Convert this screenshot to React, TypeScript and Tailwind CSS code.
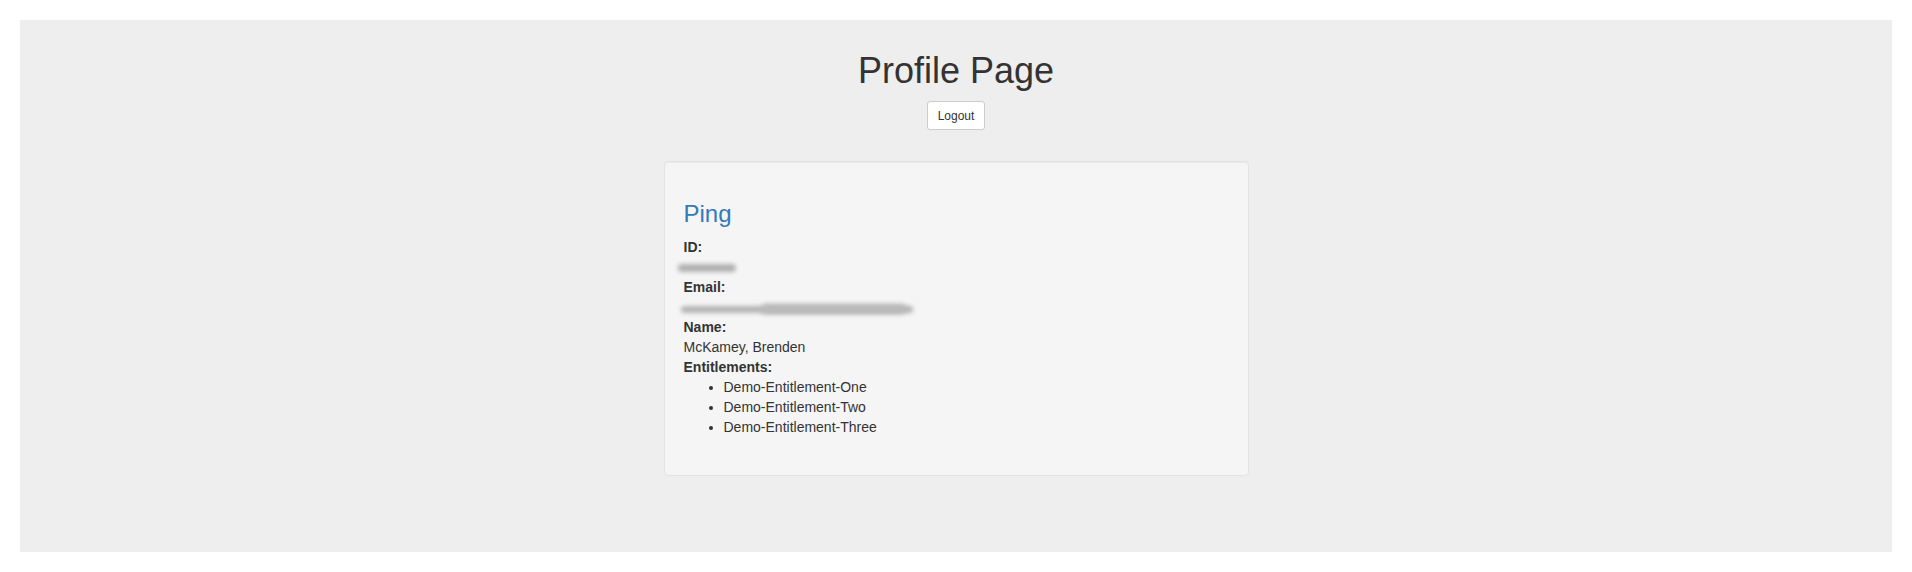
import React from 'react';

const entitlements = ['Demo-Entitlement-One', 'Demo-Entitlement-Two', 'Demo-Entitlement-Three'];

function Redacted({ wide }: { wide?: boolean }) {
  if (!wide) {
    return (
      <div className="h-5 flex items-center">
        <div className="-ml-[6px] mt-[2px] w-[58px] h-[8px] rounded-full bg-[#b0b0b0] blur-[2px]" />
      </div>
    );
  }
  return (
    <div className="h-5 flex items-center">
      <div className="relative -ml-[3px] mt-[4px] w-[234px] h-[10px]">
        <div className="absolute left-0 top-[2px] w-[232px] h-[7px] rounded-full bg-[#b4b4b4] blur-[2px]" />
        <div className="absolute left-[80px] top-0 w-[145px] h-[10px] rounded-full bg-[#bababa] blur-[2.5px]" />
      </div>
    </div>
  );
}

export default function App() {
  return (
    <div className="min-h-[572px] bg-white p-5 font-['Liberation_Sans',Arial,sans-serif] text-[#333] text-[14px] leading-5">
      <div className="bg-[#eeeeee] pt-[31px] pb-[76px] flex flex-col items-center">
        <h1 className="text-[36px] leading-[40px] font-normal">Profile Page</h1>
        <button
          type="button"
          className="mt-[10px] h-[29px] px-[10px] bg-white border border-[#cccccc] rounded-[3px] text-[12px] text-[#333]"
        >
          Logout
        </button>

        <div className="mt-[31px] w-[585px] bg-[#f5f5f5] border border-[#e3e3e3] rounded-[4px] shadow-[inset_0_1px_1px_rgba(0,0,0,0.05)] px-[19px] pt-[39px] pb-[38px]">
          <h3 className="text-[24px] leading-[26px] text-[#337ab7] mb-[10px]">Ping</h3>
          <dl>
            <dt className="font-bold">ID:</dt>
            <dd>
              <Redacted />
            </dd>
            <dt className="font-bold">Email:</dt>
            <dd>
              <Redacted wide />
            </dd>
            <dt className="font-bold">Name:</dt>
            <dd>McKamey, Brenden</dd>
            <dt className="font-bold">Entitlements:</dt>
            <dd>
              <ul className="list-disc pl-[40px]">
                {entitlements.map((e) => (
                  <li key={e}>{e}</li>
                ))}
              </ul>
            </dd>
          </dl>
        </div>
      </div>
    </div>
  );
}
